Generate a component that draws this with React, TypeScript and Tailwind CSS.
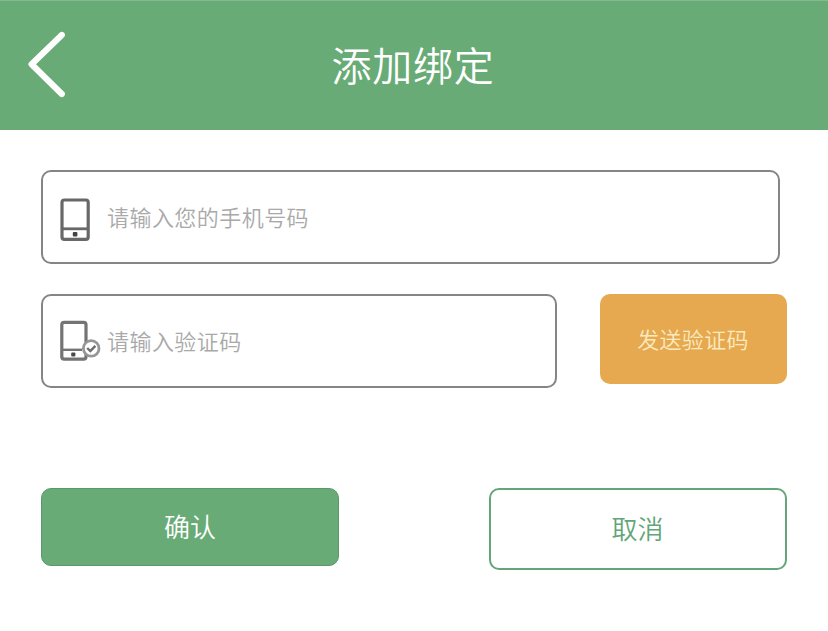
import React from "react";

function PhoneIcon() {
  return (
    <svg className="mt-[5px] h-[46px] w-[32px] shrink-0" viewBox="0 0 32 46" fill="none" stroke="#686868">
      <rect x="3" y="3" width="26.2" height="39.4" rx="2.4" strokeWidth="3.2" />
      <path d="M3 31.8H29" strokeWidth="2.8" />
      <rect x="13.8" y="35" width="4.6" height="4.4" rx="1" fill="#444444" stroke="none" />
    </svg>
  );
}

function PhoneCheckIcon() {
  return (
    <svg className="h-[44px] w-[43px] shrink-0" viewBox="0 0 43 44" fill="none" stroke="#747474">
      <rect x="2.8" y="3.4" width="24.2" height="36.8" rx="2.4" strokeWidth="3.2" />
      <path d="M3 30.8H23" strokeWidth="2.4" />
      <rect x="12.2" y="33.6" width="4.2" height="3.8" rx="1" fill="#4a4a4a" stroke="none" />
      <circle cx="32.2" cy="29.4" r="7.8" fill="#ffffff" stroke="#969696" strokeWidth="2.8" />
      <path d="M28.2 29L31.3 32L36.4 26.8" stroke="#6c6c6c" strokeWidth="2.4" />
    </svg>
  );
}

export default function App() {
  return (
    <main className="h-[631px] w-[828px] overflow-hidden bg-white font-['Noto_Sans_CJK_SC_DemiLight','Noto_Sans_CJK_SC',sans-serif] font-[350]">
      <header className="grid h-[130px] grid-cols-[100px_1fr_100px] items-center border-t border-[#87ba92] bg-[#68ab76]">
        <button aria-label="返回" className="mb-px ml-[24px] w-[46px]">
          <svg className="h-[74px] w-[46px]" viewBox="0 0 46 74" fill="none" stroke="#ffffff" strokeWidth="6.2" strokeLinecap="round" strokeLinejoin="round">
            <path d="M37.8 7L7.6 36.2L37.8 66" />
          </svg>
        </button>
        <h1 className="mb-[4px] pr-[2px] text-center text-[40px] leading-[60px] tracking-[0.8px] text-white">添加绑定</h1>
      </header>
      <form className="px-[41px] pt-[40px]" onSubmit={(e) => e.preventDefault()}>
        <label className="flex h-[94px] w-[739px] items-center rounded-[10px] border-2 border-[#858585] pl-[16px]">
          <PhoneIcon />
          <span className="mb-[3px] ml-[16px] text-[22px] leading-[32px] tracking-[0.45px] text-[#a9a9a9]">请输入您的手机号码</span>
        </label>
        <div className="mt-[30px] flex w-[746px] items-start justify-between">
          <label className="flex h-[94px] w-[516px] items-center rounded-[10px] border-2 border-[#858585] pl-[16px]">
            <PhoneCheckIcon />
            <span className="mb-[3px] ml-[5px] text-[22px] leading-[32px] tracking-[0.45px] text-[#a9a9a9]">请输入验证码</span>
          </label>
          <button className="h-[90px] w-[187px] rounded-[10px] bg-[#e6a950] pr-px pb-[2px] text-[22px] leading-[32px] tracking-[0.3px] text-[#fbeac0]">发送验证码</button>
        </div>
        <div className="mt-[100px] flex w-[746px] items-start justify-between">
          <button className="h-[78px] w-[298px] rounded-[10px] border border-[#589968] bg-[#68ab76] pb-[2px] text-[26px] leading-[38px] text-white">确认</button>
          <button className="h-[82px] w-[298px] rounded-[10px] border-2 border-[#65a578] bg-white pr-px pb-[2px] text-[26px] leading-[38px] text-[#62a578]">取消</button>
        </div>
      </form>
    </main>
  );
}
